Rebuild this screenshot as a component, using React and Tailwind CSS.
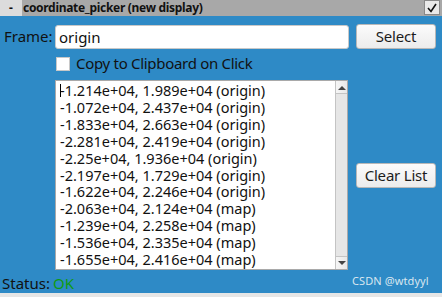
const items = [
  '-1.214e+04, 1.989e+04 (origin)',
  '-1.072e+04, 2.437e+04 (origin)',
  '-1.833e+04, 2.663e+04 (origin)',
  '-2.281e+04, 2.419e+04 (origin)',
  '-2.25e+04, 1.936e+04 (origin)',
  '-2.197e+04, 1.729e+04 (origin)',
  '-1.622e+04, 2.246e+04 (origin)',
  '-2.063e+04, 2.124e+04 (map)',
  '-1.239e+04, 2.258e+04 (map)',
  '-1.536e+04, 2.335e+04 (map)',
  '-1.655e+04, 2.416e+04 (map)',
]

function Button({ children }) {
  return (
    <button className="w-[80px] h-[25px] rounded-[3px] border border-[#b8b8b8] bg-gradient-to-b from-[#fbfbfb] to-[#ececec] text-[15px] tracking-[-0.2px] text-[#1c1c1c] leading-none">
      {children}
    </button>
  )
}

export default function App() {
  return (
    <div
      className="w-[442px] h-[297px] flex flex-col bg-[#e6e6e6] overflow-hidden relative"
      style={{ fontFamily: '"Noto Sans", "Open Sans", sans-serif' }}
    >
      {/* title bar */}
      <div className="h-[16px] flex text-[12px] leading-[16px] text-[#111]">
        <div className="w-[22px] bg-[#dcdcdc] text-center font-bold">-</div>
        <div className="flex-1 bg-[#a8a8a8] font-bold pl-[1px] tracking-[-0.3px]">coordinate_picker (new display)</div>
        <div className="w-[18px] bg-[#a8a8a8] flex items-start">
          <div className="w-[16px] h-[15px] border border-[#888] bg-[#e9e9e9] flex items-center justify-center">
            <svg width="10" height="10" viewBox="0 0 10 10">
              <path d="M1 5 L4 8.5 L9 1" fill="none" stroke="#111" strokeWidth="1.6" />
            </svg>
          </div>
        </div>
      </div>

      {/* body */}
      <div className="flex-1 bg-[#2e8ac6] flex flex-col pt-[8px] text-[15px] text-[#111]">
        <div className="flex items-center h-[25px]">
          <div className="w-[55px] pl-[4px]">Frame:</div>
          <div className="w-[294px] h-[24px] bg-white rounded-[3px] border border-[#c8c8c8] pl-[3px] leading-[22px]">origin</div>
          <div className="ml-[7px]">
            <Button>Select</Button>
          </div>
        </div>

        <div className="flex items-center h-[15px] mt-[7px] pl-[56px]">
          <div className="w-[14px] h-[14px] bg-white border border-[#c8c8c8]" />
          <div className="ml-[6px] tracking-[-0.3px]">Copy to Clipboard on Click</div>
        </div>

        <div className="flex items-center mt-[9px]">
          <div className="ml-[55px] w-[293px] h-[190px] bg-white border border-[#a9a9a9] flex">
            <div className="flex-1 pl-[4px] pt-[1px] text-[14.5px] leading-[16.9px] overflow-hidden">
              {items.map((t, i) => (
                <div key={i} className="whitespace-nowrap relative">
                  {i === 0 && <span className="absolute left-0 top-[2px] h-[13px] w-px bg-black" />}
                  {t}
                </div>
              ))}
            </div>
            <div className="w-[12px] bg-[#e6e6e6] border-l border-[#c4c4c4] flex flex-col justify-between">
              <div className="h-[13px] bg-gradient-to-r from-[#f6f6f6] to-[#e8e8e8] border-b border-[#c4c4c4] flex items-center justify-center">
                <svg width="8" height="5" viewBox="0 0 8 5"><path d="M0 5 L4 1 L8 5 Z" fill="#444" /></svg>
              </div>
              <div className="h-[13px] bg-gradient-to-r from-[#f6f6f6] to-[#e8e8e8] border-t border-[#c4c4c4] flex items-center justify-center">
                <svg width="8" height="5" viewBox="0 0 8 5"><path d="M0 0 L4 4 L8 0 Z" fill="#444" /></svg>
              </div>
            </div>
          </div>
          <div className="ml-[8px]">
            <Button>Clear List</Button>
          </div>
        </div>

        <div className="flex items-center h-[18px] mt-[4px]">
          <div className="w-[53px] pl-[2px]">Status:</div>
          <div className="text-[#109a10]">OK</div>
        </div>
      </div>
      <div className="h-[4px] bg-[#e6e6e6]" />

      <div className="absolute left-[352px] top-[273px] text-[11px] text-[#d8e6f0] tracking-[0.1px]">CSDN @wtdyyl</div>
    </div>
  )
}
